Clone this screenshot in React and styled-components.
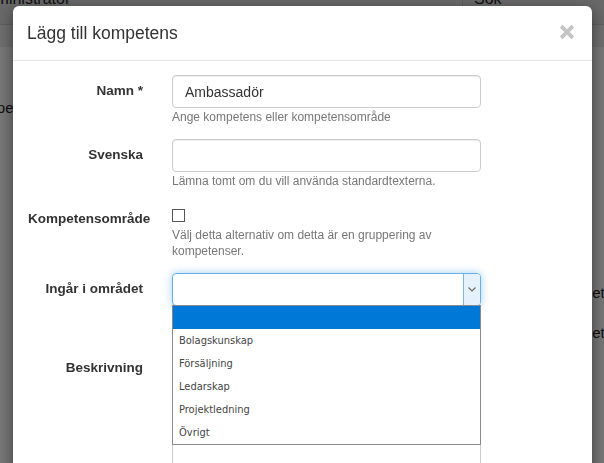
import styled, { createGlobalStyle } from "styled-components";

const GlobalStyle = createGlobalStyle`
  html, body {
    margin: 0;
    padding: 0;
    height: 463px;
    overflow: hidden;
    font-family: "Liberation Sans", Arial, sans-serif;
  }
`;

const options = [
  "Bolagskunskap",
  "Försäljning",
  "Ledarskap",
  "Projektledning",
  "Övrigt",
];

export default function App() {
  return (
    <>
      <GlobalStyle />
      <Page>
        <NavBar>
          <NavUser>Administrator</NavUser>
          <NavSearch>Sök</NavSearch>
        </NavBar>
        <SubBar />
        <PageContent>
          <PageLeft>Kompetenser</PageLeft>
          <PageRight>
            <PageLine>Kompetens</PageLine>
            <PageLine>Kompetens</PageLine>
          </PageRight>
        </PageContent>
      </Page>
      <Backdrop />

      <Modal>
        <Header>
          <Title>Lägg till kompetens</Title>
          <CloseButton aria-label="Stäng">
            <svg width="16" height="16" viewBox="0 0 16 16">
              <path
                d="M2.2 2.2 L13.8 13.8 M13.8 2.2 L2.2 13.8"
                stroke="#c4c4c4"
                strokeWidth="3.8"
              />
            </svg>
          </CloseButton>
        </Header>

        <Body>
          <FormGroup>
            <Label>Namn *</Label>
            <Field>
              <Input>Ambassadör</Input>
              <Help>Ange kompetens eller kompetensområde</Help>
            </Field>
          </FormGroup>

          <FormGroup>
            <Label>Svenska</Label>
            <Field>
              <Input />
              <Help>Lämna tomt om du vill använda standardtexterna.</Help>
            </Field>
          </FormGroup>

          <FormGroup>
            <Label>Kompetensområde</Label>
            <Field>
              <Checkbox />
              <Help>
                Välj detta alternativ om detta är en gruppering av
                <br />
                kompetenser.
              </Help>
            </Field>
          </FormGroup>

          <FormGroup $gap={46}>
            <Label>Ingår i området</Label>
            <Field>
              <Select>
                <ArrowButton>
                  <svg width="8" height="5" viewBox="0 0 8 5">
                    <path
                      d="M0.5 0.5 L4 4 L7.5 0.5"
                      fill="none"
                      stroke="#6a6a6a"
                      strokeWidth="1.1"
                    />
                  </svg>
                </ArrowButton>
              </Select>
              <OptionList>
                <Option $selected />
                {options.map((o) => (
                  <Option key={o}>{o}</Option>
                ))}
              </OptionList>
            </Field>
          </FormGroup>

          <FormGroup>
            <Label>Beskrivning</Label>
            <Field>
              <TextArea />
            </Field>
          </FormGroup>
        </Body>
      </Modal>
    </>
  );
}

const Page = styled.div`
  height: 463px;
  background: #fff;
  display: flex;
  flex-direction: column;
`;

const NavBar = styled.div`
  height: 24px;
  background: #e0e0e0;
  border-bottom: 1px solid #cbcbcb;
  display: flex;
  align-items: flex-start;
  overflow: hidden;
`;

const NavUser = styled.div`
  margin-left: -24px;
  margin-top: -10px;
  width: 92px;
  font-size: 16px;
  color: #222;
  border-right: 1px solid #c8c8c8;
  height: 34px;
`;

const NavSearch = styled.div`
  margin-left: auto;
  width: 130px;
  margin-top: -10px;
  padding-left: 11px;
  font-size: 16px;
  color: #222;
  border-left: 1px solid #c8c8c8;
  height: 34px;
`;

const SubBar = styled.div`
  height: 22px;
  background: #ececec;
`;

const PageContent = styled.div`
  flex: 1;
  display: flex;
  align-items: flex-start;
  padding-top: 52px;
`;

const PageLine = styled.div`
  font-size: 15px;
  color: #222;
  white-space: nowrap;
  height: 40px;
`;

const PageLeft = styled(PageLine)`
  margin-left: -34px;
`;

const PageRight = styled.div`
  margin-left: auto;
  width: 51px;
  overflow: hidden;
  padding-top: 185px;
`;

const Backdrop = styled.div`
  position: fixed;
  inset: 0;
  background: rgba(0, 0, 0, 0.53);
`;

const Modal = styled.div`
  position: absolute;
  left: 13px;
  top: 6px;
  width: 579px;
  height: 640px;
  background: #fff;
  border-radius: 6px;
  box-shadow: 0 5px 15px rgba(0, 0, 0, 0.5);
  display: flex;
  flex-direction: column;
`;

const Header = styled.div`
  display: flex;
  align-items: center;
  justify-content: space-between;
  padding: 15px 17px 14px 14px;
  border-bottom: 1px solid #e5e5e5;
`;

const Title = styled.h4`
  margin: 0;
  font-size: 17.5px;
  font-weight: 500;
  line-height: 25px;
  color: #333;
`;

const CloseButton = styled.button`
  border: 0;
  background: none;
  padding: 0;
  display: flex;
  margin-top: -3px;
`;

const Body = styled.div`
  padding: 14px 15px;
  display: flex;
  flex-direction: column;
`;

const FormGroup = styled.div`
  display: grid;
  grid-template-columns: 115px 309px;
  column-gap: 29px;
  margin-bottom: ${(p) => p.$gap ?? 14}px;
`;

const Label = styled.label`
  padding-top: 6px;
  line-height: 20px;
  font-size: 13.5px;
  font-weight: bold;
  color: #333;
  text-align: right;
  white-space: nowrap;
`;

const Field = styled.div`
  position: relative;
  display: flex;
  flex-direction: column;
`;

const Input = styled.div`
  box-sizing: border-box;
  height: 33px;
  padding: 7px 12px;
  border: 1px solid #ccc;
  border-radius: 4px;
  box-shadow: inset 0 1px 1px rgba(0, 0, 0, 0.075);
  font-size: 14px;
  line-height: 18px;
  color: #333;
`;

const Help = styled.div`
  font-size: 12px;
  line-height: 16px;
  color: #777;
  margin-top: 1px;
`;

const Checkbox = styled.span`
  display: block;
  box-sizing: border-box;
  width: 13px;
  height: 13px;
  margin-top: 6px;
  margin-bottom: 4px;
  border: 1px solid #555;
  background: #fff;
`;

const Select = styled.div`
  box-sizing: border-box;
  height: 33px;
  border: 1px solid #66afe9;
  border-radius: 4px;
  box-shadow: 0 0 8px rgba(102, 175, 233, 0.6);
  display: flex;
  justify-content: flex-end;
  overflow: hidden;
`;

const ArrowButton = styled.span`
  width: 16px;
  background: #e5f1fb;
  border-left: 1px solid #7eb4ea;
  display: flex;
  align-items: center;
  justify-content: center;
`;

const OptionList = styled.div`
  position: absolute;
  top: 32px;
  left: 0;
  right: 0;
  z-index: 2;
  background: #fff;
  border: 1px solid #8a8a8a;
  font-family: "DejaVu Sans Condensed", "Segoe UI", sans-serif;
`;

const Option = styled.div`
  height: 23px;
  line-height: 23px;
  padding-left: 6px;
  font-size: 11px;
  color: ${(p) => (p.$selected ? "#fff" : "#444")};
  background: ${(p) => (p.$selected ? "#0078d7" : "#fff")};
`;

const TextArea = styled.div`
  box-sizing: border-box;
  height: 140px;
  border: 1px solid #ccc;
  border-radius: 4px;
`;
